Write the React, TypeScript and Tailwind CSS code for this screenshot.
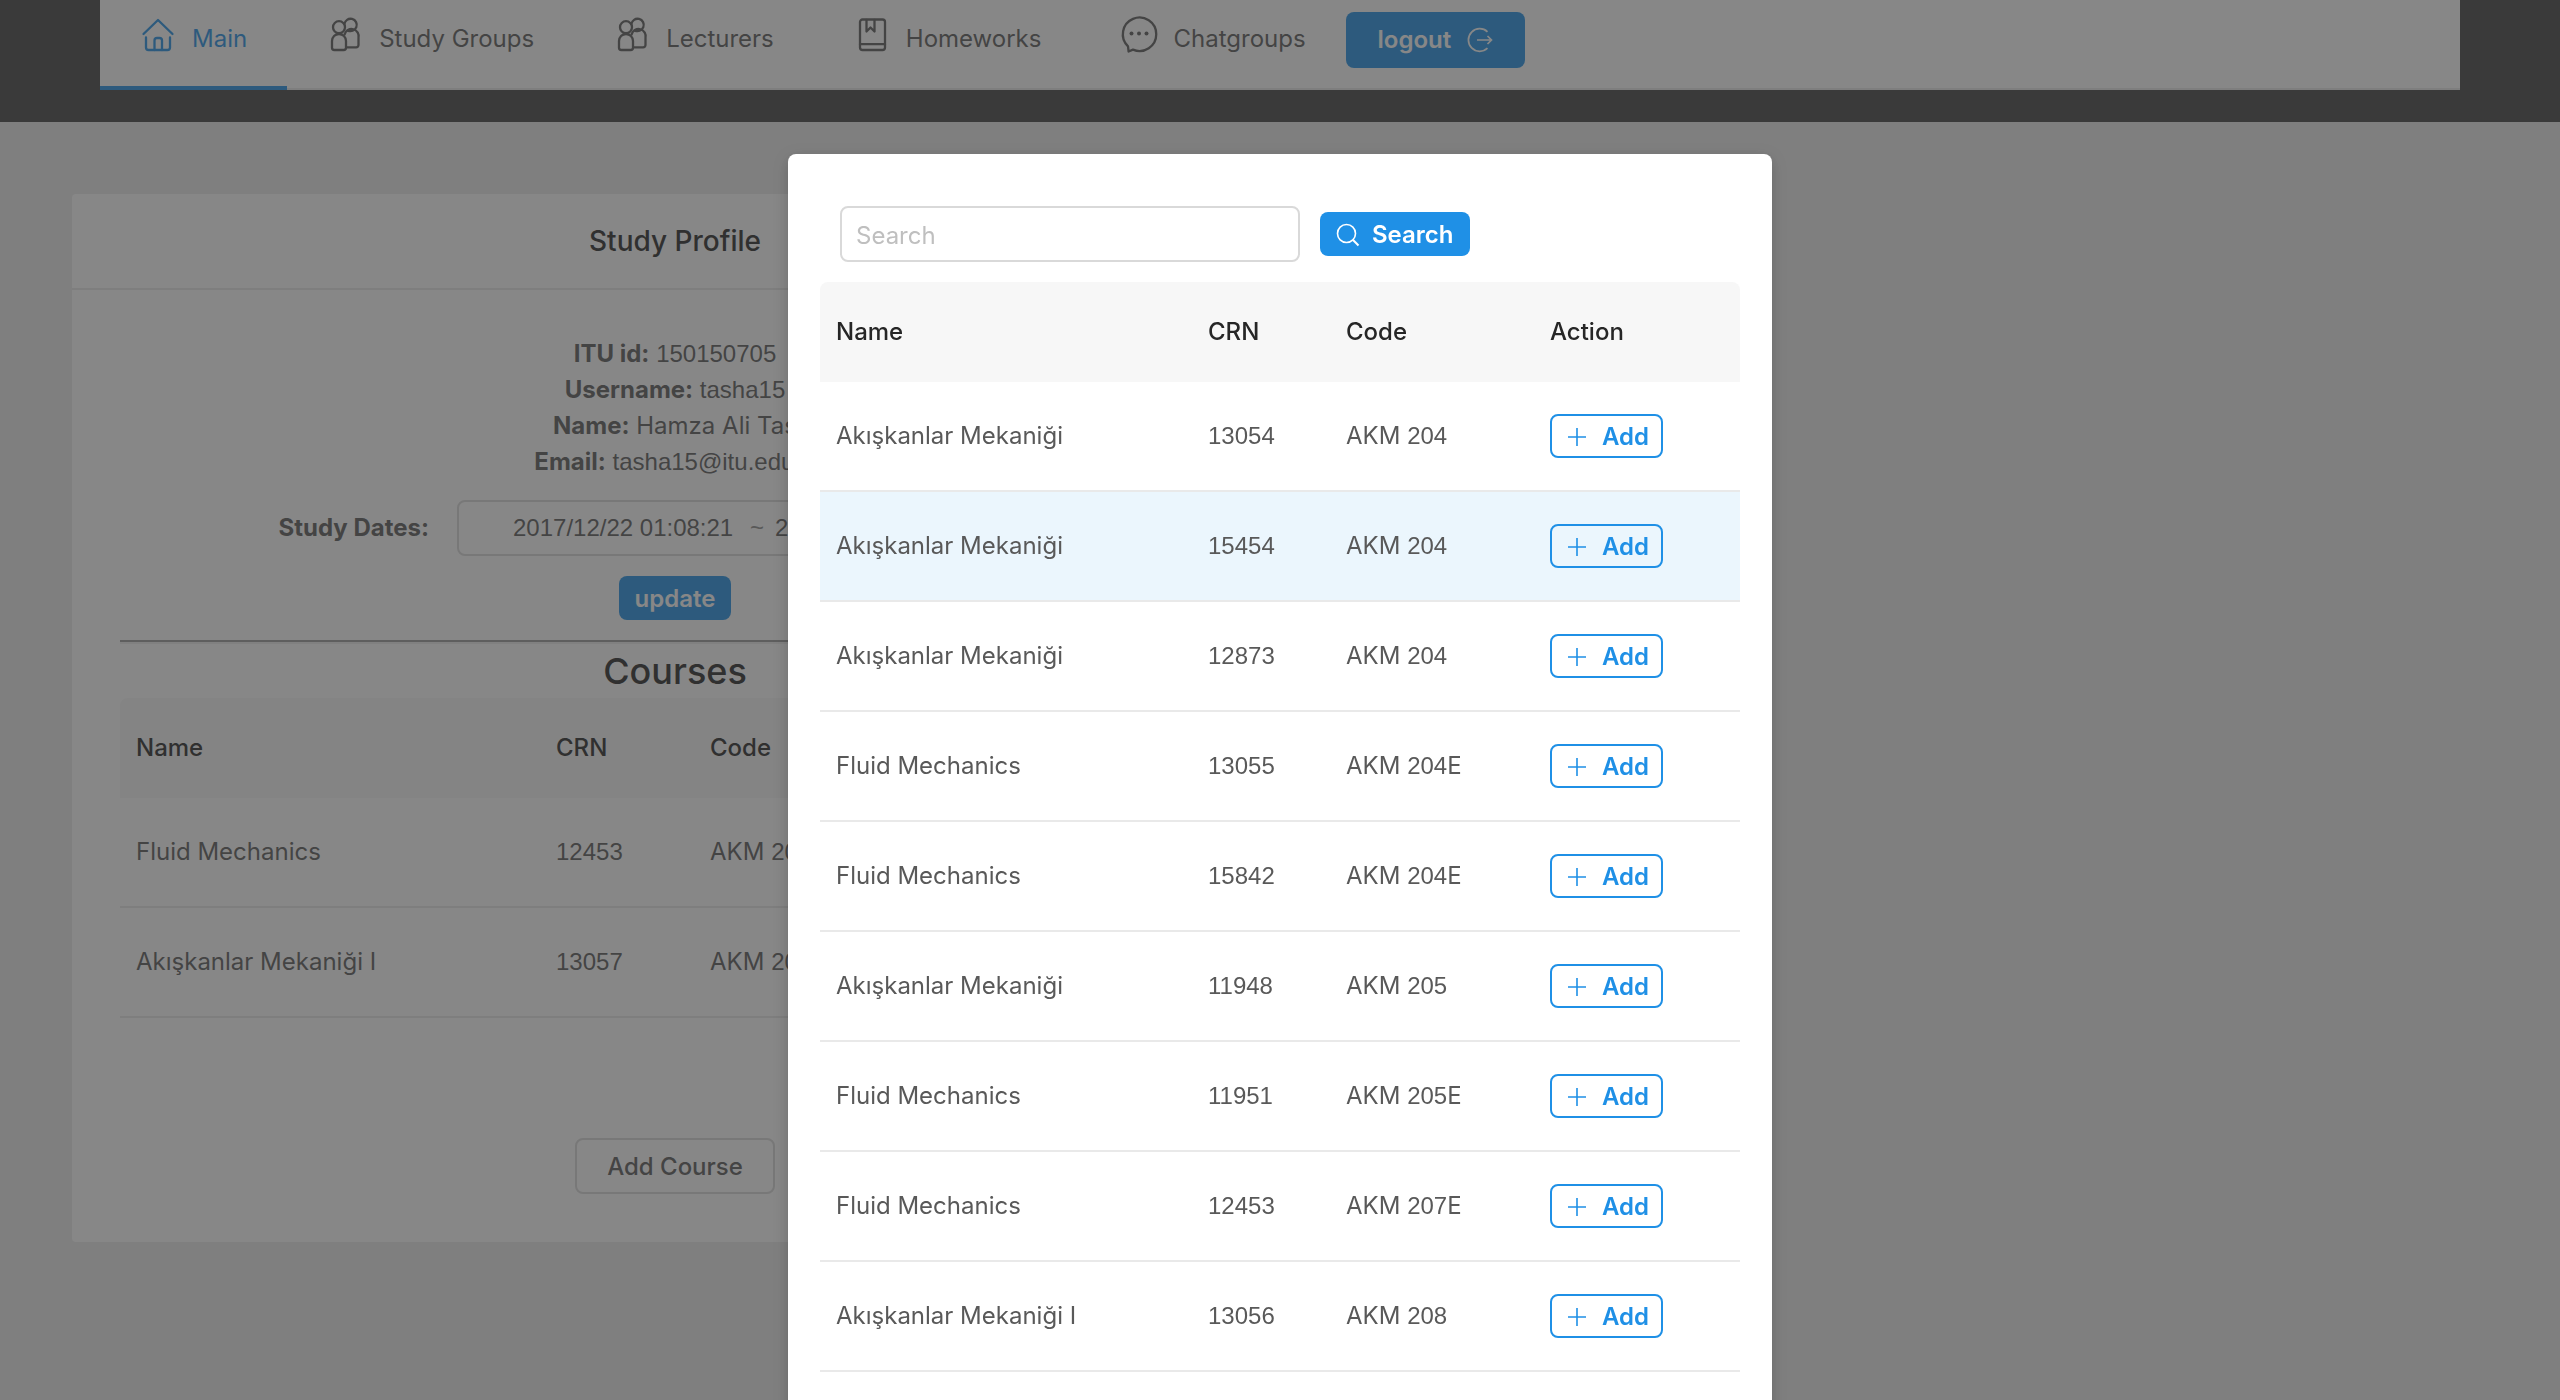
import type { ReactNode } from "react";

type Course = { name: string; crn: string; dept: string; num: string; suffix?: string };

const RESULTS: Course[] = [
  { name: "Akışkanlar Mekaniği", crn: "13054", dept: "AKM", num: "204" },
  { name: "Akışkanlar Mekaniği", crn: "15454", dept: "AKM", num: "204" },
  { name: "Akışkanlar Mekaniği", crn: "12873", dept: "AKM", num: "204" },
  { name: "Fluid Mechanics", crn: "13055", dept: "AKM", num: "204", suffix: "E" },
  { name: "Fluid Mechanics", crn: "15842", dept: "AKM", num: "204", suffix: "E" },
  { name: "Akışkanlar Mekaniği", crn: "11948", dept: "AKM", num: "205" },
  { name: "Fluid Mechanics", crn: "11951", dept: "AKM", num: "205", suffix: "E" },
  { name: "Fluid Mechanics", crn: "12453", dept: "AKM", num: "207", suffix: "E" },
  { name: "Akışkanlar Mekaniği I", crn: "13056", dept: "AKM", num: "208" },
];

const MY_COURSES: Course[] = [
  { name: "Fluid Mechanics", crn: "12453", dept: "AKM", num: "207", suffix: "E" },
  { name: "Akışkanlar Mekaniği I", crn: "13057", dept: "AKM", num: "208" },
];

/* Figures are set in a Helvetica-like face, words in the interface face. */
function Num({ children }: { children: ReactNode }) {
  return <span className="font-['Liberation_Sans',sans-serif]">{children}</span>;
}

function NavIcon({ children }: { children: ReactNode }) {
  return (
    <svg
      viewBox="0 0 36 36"
      className="mb-2 size-9 shrink-0 overflow-visible"
      fill="none"
      stroke="currentColor"
      strokeWidth="2.3"
      strokeLinecap="round"
      strokeLinejoin="round"
      aria-hidden="true"
    >
      {children}
    </svg>
  );
}

const UsersIcon = () => (
  <NavIcon>
    <circle cx="12" cy="10.2" r="6" />
    <path d="M17.4 7.2a6.2 6.2 0 1 1 3.2 6.200" />
    <path d="M5 30.7V24a7 7 0 0 1 14 0v6.700a2.300 2.300 0 0 1-2.300 2.300H7.300A2.300 2.300 0 0 1 5 30.700z" />
    <path d="M17.600 17.400a7 7 0 0 1 13.900 3.600V28a2.300 2.300 0 0 1-2.300 2.300H20" />
  </NavIcon>
);

function NavItem({ icon, label, active }: { icon: ReactNode; label: string; active?: boolean }) {
  return (
    <li className="-mb-0.5 h-[90px]">
      <a
        href="#"
        className={
          active
            ? "flex h-full items-center gap-4 border-b-4 border-[#1f90e6] px-10 pb-2 text-[#1f90e6]"
            : "flex h-full items-center gap-4 border-b-4 border-transparent px-10 pb-2"
        }
      >
        {icon}
        {label}
      </a>
    </li>
  );
}

function CourseTable({ courses, hovered, cols, action }: {
  courses: Course[];
  hovered?: number;
  cols: ReactNode;
  action: string;
}) {
  return (
    <table className="w-full table-fixed border-separate border-spacing-0 text-left">
      <colgroup>{cols}</colgroup>
      <thead>
        <tr className="h-[100px] text-[#262626]">
          <th className="rounded-tl-lg bg-[#f7f7f7] px-4 font-medium">Name</th>
          <th className="bg-[#f7f7f7] px-4 font-medium">CRN</th>
          <th className="bg-[#f7f7f7] px-4 font-medium">Code</th>
          <th className="rounded-tr-lg bg-[#f7f7f7] px-4 font-medium">Action</th>
        </tr>
      </thead>
      <tbody>
        {courses.map((c, i) => (
          <tr key={c.crn} className={i === hovered ? "h-[110px] bg-[#ebf6fd]" : "h-[110px]"}>
            <td className="border-b-2 border-[#e9e9e9] px-4">{c.name}</td>
            <td className="border-b-2 border-[#e9e9e9] px-4"><Num>{c.crn}</Num></td>
            <td className="border-b-2 border-[#e9e9e9] px-4">
              {c.dept} <Num>{c.num}</Num>{c.suffix}
            </td>
            <td className="border-b-2 border-[#e9e9e9] px-4">
              <button
                type="button"
                className="flex h-11 items-center gap-4 rounded-lg border-2 border-[#1f90e6] pt-0.5 pr-3 pl-4 font-semibold text-[#1f90e6]"
              >
                {action === "Add" && (
                  <svg viewBox="0 0 18 18" className="size-[18px]" fill="none" stroke="currentColor" strokeWidth="1.6" aria-hidden="true">
                    <path d="M9 0v18M0 9h18" />
                  </svg>
                )}
                {action}
              </button>
            </td>
          </tr>
        ))}
      </tbody>
    </table>
  );
}

function ProfileCard() {
  return (
    <section className="rounded-sm bg-white">
      <h3 className="flex h-24 items-center justify-center border-b-2 border-[#e9e9e9] text-[28px] font-medium text-[#262626]">
        Study Profile
      </h3>
      <div className="px-12 pt-[46px] pb-12 text-center">
        <p><b>ITU id:</b> <Num>150150705</Num></p>
        <p><b>Username:</b> <Num>tasha15</Num></p>
        <p><b>Name:</b> Hamza Ali Tas</p>
        <p><b>Email:</b> <Num>tasha15@itu.edu.tr</Num></p>

        <div className="mt-5 flex items-center">
          <label htmlFor="study-start" className="w-[309px] text-right font-bold">Study Dates:</label>
          <div className="ml-7 flex h-14 w-[600px] items-center rounded-lg border-2 border-[#d9d9d9] pl-[54px] font-['Liberation_Sans',sans-serif]">
            <input id="study-start" className="w-[226px] bg-transparent outline-none" defaultValue="2017/12/22 01:08:21" />
            <span className="w-9 text-center text-[#8c8c8c]">~</span>
            <input aria-label="Study end" className="w-[226px] bg-transparent outline-none" defaultValue="2017/12/22 03:08:21" />
          </div>
        </div>

        <button type="button" className="mt-5 h-11 rounded-lg bg-[#1f90e6] px-4 pt-0.5 font-semibold text-white">update</button>
        <hr className="mt-5 h-1 border-t-2 border-b-2 border-t-[#9a9a9a] border-b-[#eeeeee]" />
        <h2 className="text-[36px] leading-[54px] font-medium text-[#262626]">Courses</h2>
        <CourseTable
          courses={MY_COURSES}
          action="Remove"
          cols={<><col className="w-[420px]" /><col className="w-[154px]" /><col className="w-[268px]" /><col /></>}
        />
        <button type="button" className="mt-30 h-14 rounded-lg border-2 border-[#d9d9d9] px-[30px] pt-0.5 font-medium">Add Course</button>
      </div>
    </section>
  );
}

function SearchModal() {
  return (
    <div className="fixed inset-0 overflow-hidden bg-[rgba(55,55,55,0.6)] pt-[154px]">
      <div
        role="dialog"
        aria-modal="true"
        aria-label="Add course"
        className="mx-auto w-[984px] max-w-full rounded-lg bg-white px-8 pt-[52px] pb-12 shadow-[0_4px_16px_rgba(0,0,0,0.2)]"
      >
        <form className="mb-5 flex items-center gap-5 px-5" onSubmit={(e) => e.preventDefault()}>
          <input
            type="text"
            placeholder="Search"
            aria-label="Search courses"
            className="h-14 w-[460px] rounded-lg border-2 border-[#d9d9d9] px-[14px] pt-0.5 outline-none placeholder:text-[#bfbfbf]"
          />
          <button type="submit" className="flex h-11 items-center gap-3 rounded-lg bg-[#1f90e6] px-4 pt-0.5 font-semibold text-white">
            <svg viewBox="0 0 24 24" className="size-6" fill="none" stroke="currentColor" strokeWidth="1.6" aria-hidden="true">
              <circle cx="10.5" cy="10.5" r="9" />
              <path d="M16.8 16.8l5.7 5.7" strokeWidth="2" />
            </svg>
            Search
          </button>
        </form>
        <CourseTable
          courses={RESULTS}
          hovered={1}
          action="Add"
          cols={<><col className="w-[372px]" /><col className="w-[138px]" /><col className="w-[204px]" /><col /></>}
        />
      </div>
    </div>
  );
}

export default function App() {
  return (
    <div className="h-screen overflow-hidden bg-[#ececec] font-['Inter',sans-serif] text-[24px] leading-9 text-[#595959]">
      <header className="h-[122px] bg-[#404040] px-[100px]">
        <nav className="h-[90px] border-b-2 border-[#e9e9e9] bg-white">
          <ul className="flex">
            <NavItem
              active
              label="Main"
              icon={
                <NavIcon>
                  <path d="M3.5 17L18 3l14.500 14" />
                  <path d="M6 20.5v10A2.5 2.5 0 0 0 8.5 33h19a2.5 2.5 0 0 0 2.5-2.5v-10" />
                  <path d="M14.5 33v-9.5a2.5 2.5 0 0 1 2.5-2.5h2.5a2.5 2.5 0 0 1 2.5 2.5V33" />
                </NavIcon>
              }
            />
            <NavItem label="Study Groups" icon={<UsersIcon />} />
            <NavItem label="Lecturers" icon={<UsersIcon />} />
            <NavItem
              label="Homeworks"
              icon={
                <NavIcon>
                  <rect x="6" y="2.5" width="25" height="30.5" rx="2.500" />
                  <path d="M6 27.2h25M12.5 3v11.5l4-4 4 4V3" />
                </NavIcon>
              }
            />
            <NavItem
              label="Chatgroups"
              icon={
                <NavIcon>
                  <path d="M7.6 34.5L7 29.3A16.7 16.7 0 1 1 12 32.6z" />
                  <g fill="currentColor" stroke="none">
                    <circle cx="10.5" cy="16.5" r="2" />
                    <circle cx="18" cy="16.5" r="2" />
                    <circle cx="25.5" cy="16.5" r="2" />
                  </g>
                </NavIcon>
              }
            />
            <li className="pt-3">
              <button type="button" className="flex h-14 items-center gap-4 rounded-lg bg-[#1f90e6] px-8 font-semibold text-white">
                logout
                <svg viewBox="0 0 26 26" className="size-[26px]" fill="none" stroke="currentColor" strokeWidth="1.7" aria-hidden="true">
                  <path d="M20.5 4.8a11.3 11.3 0 1 0 0 16.4" />
                  <path d="M10 13h14.5M20.500 9l4 4-4 4" />
                </svg>
              </button>
            </li>
          </ul>
        </nav>
      </header>
      <main className="grid grid-cols-2 gap-1 px-18 pt-18">
        <ProfileCard />
      </main>
      <SearchModal />
    </div>
  );
}
